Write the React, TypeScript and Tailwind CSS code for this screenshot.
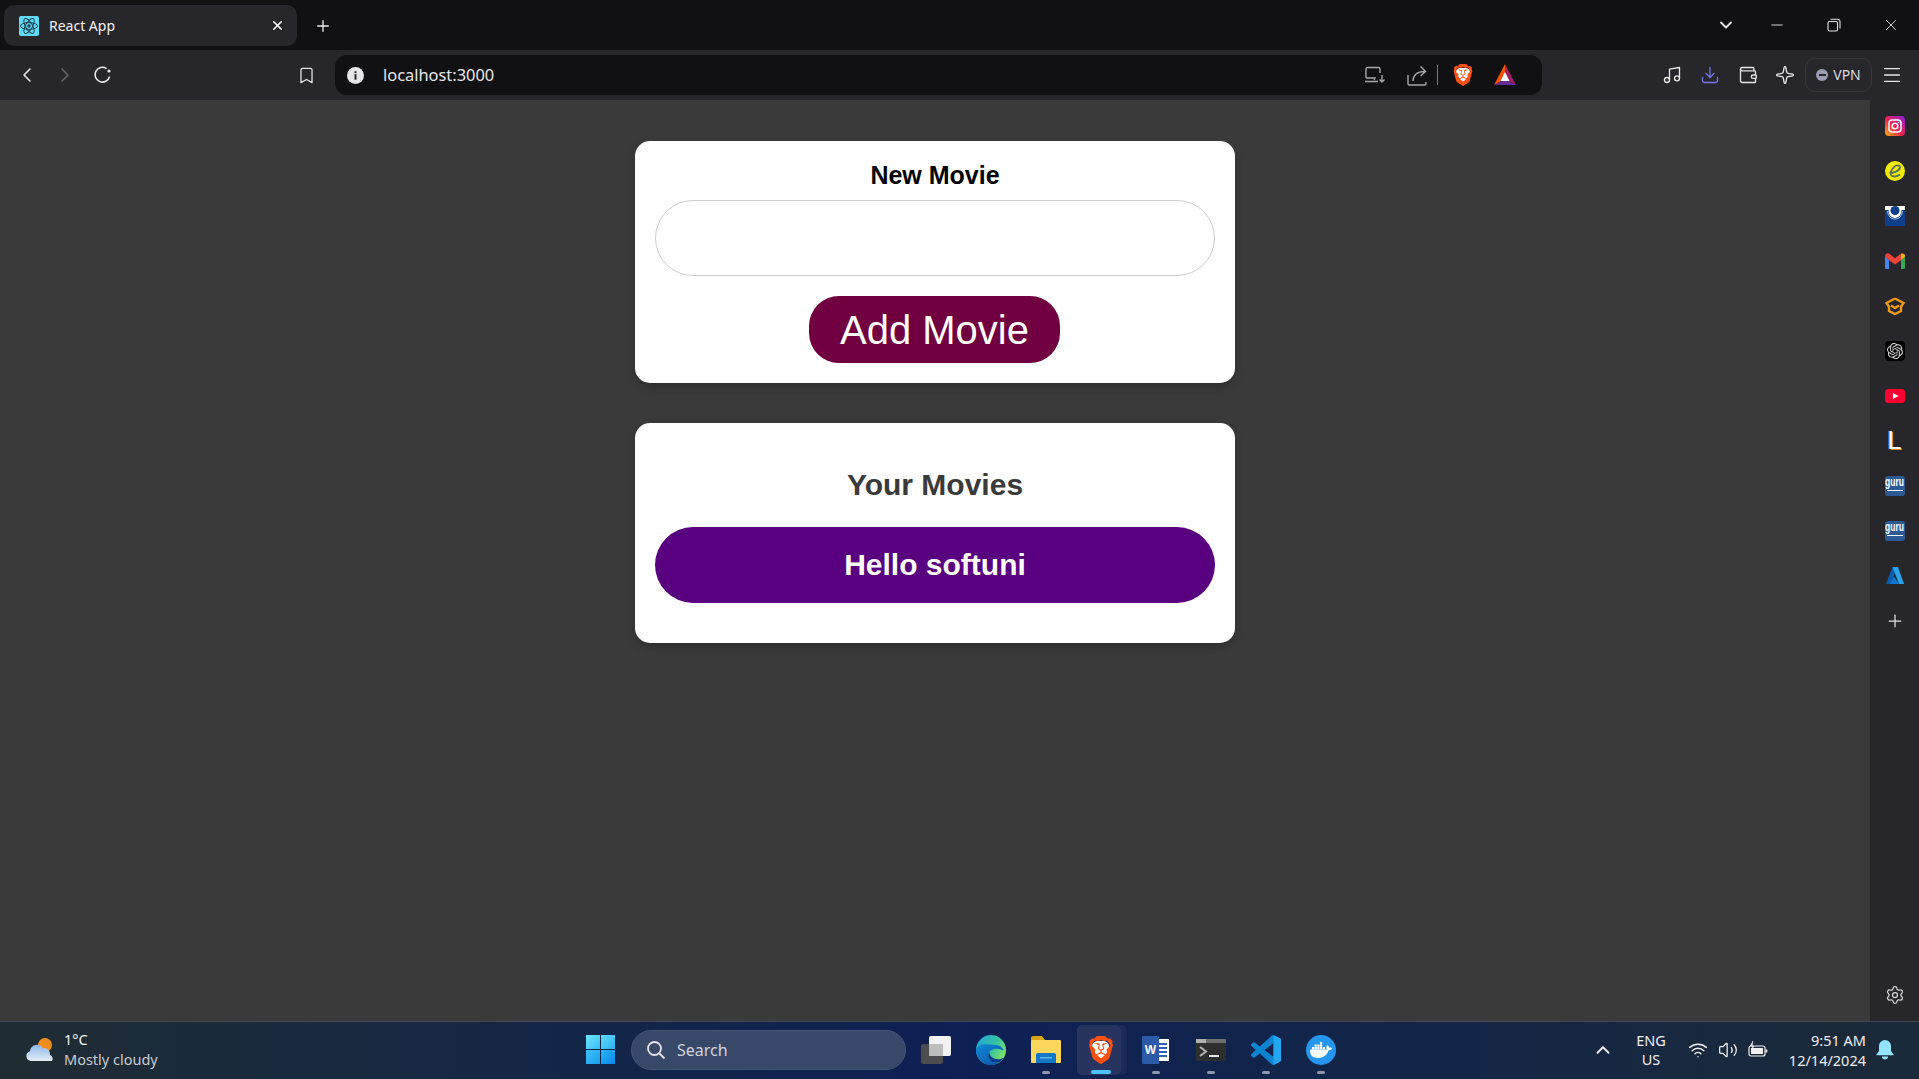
import {
  Bookmark,
  ChevronDown,
  ChevronLeft,
  ChevronRight,
  ChevronUp,
  Download,
  Menu,
  Minus,
  Music,
  Plus,
  Settings,
  Sparkle,
  Volume2,
  Wallet,
  Wifi,
  X,
} from "lucide-react";
import { SiBrave, SiDocker, SiOpenai } from "react-icons/si";

const uiFont = "font-['Noto_Sans','Open_Sans',sans-serif]";

const BraveIcon = ({ size }: { size: number }) => (
  <div className="relative flex items-center justify-center" style={{ width: size, height: size }}>
    <div className="absolute inset-[18%] rounded-[30%] bg-white"></div>
    <SiBrave size={size} color="#fb4f14" className="relative" />
  </div>
);

const BatIcon = () => (
  <svg width="24" height="24" viewBox="0 0 24 24">
    <polygon points="12,1 1,22 12,16" fill="#ff5000" />
    <polygon points="12,1 23,22 12,16" fill="#9e1f63" />
    <polygon points="1,22 23,22 12,16" fill="#662d91" />
    <polygon points="12,9 7.5,18 16.5,18" fill="#fff" />
  </svg>
);

const ReactFavicon = () => (
  <svg width="20" height="20" viewBox="0 0 20 20">
    <rect width="20" height="20" rx="2" fill="#61dafb" />
    <g fill="none" stroke="#20404c" strokeWidth="1">
      <ellipse cx="10" cy="10" rx="8.5" ry="3.4" />
      <ellipse cx="10" cy="10" rx="8.5" ry="3.4" transform="rotate(60 10 10)" />
      <ellipse cx="10" cy="10" rx="8.5" ry="3.4" transform="rotate(120 10 10)" />
    </g>
    <circle cx="10" cy="10" r="1.7" fill="#20404c" />
  </svg>
);

const TitleBar = () => (
  <div className="flex h-[50px] shrink-0 bg-[#111113] pl-1 pt-[5px]">
    <div className="flex h-[41px] w-[293px] items-center rounded-[10px] bg-[#26262b] pl-[15px]">
      <ReactFavicon />
      <span className="ml-[10px] text-sm text-[#f4f4f5]">React App</span>
      <X size={15} strokeWidth={2.5} className="ml-auto mr-[12px] text-white" />
    </div>
    <div className="flex h-[41px] w-[52px] items-center justify-center">
      <Plus size={18} strokeWidth={1.8} className="text-[#ececec]" />
    </div>
    <div className="ml-auto flex h-[40px] items-center text-[#e6e6e6]">
      <ChevronDown size={20} strokeWidth={2.2} className="mr-[32px]" />
      <Minus size={18} strokeWidth={1.2} className="mr-[41px]" />
      <svg width="14" height="14" viewBox="0 0 14 14" fill="none" stroke="currentColor" strokeWidth="1.1" className="mr-[41px]">
        <rect x="1" y="3.5" width="9.5" height="9.5" rx="1.5" />
        <path d="M3.5 1.2h7.3a2.2 2.2 0 0 1 2.2 2.2v7.2" />
      </svg>
      <X size={18} strokeWidth={1.2} className="mr-[19px]" />
    </div>
  </div>
);

const CastIcon = () => (
  <svg width="22" height="18" viewBox="0 0 22 18" fill="none" stroke="#a6a6ab" strokeWidth="1.4">
    <path d="M2 12V3a1.5 1.5 0 0 1 1.5-1.5h11A1.5 1.5 0 0 1 16 3v4" />
    <path d="M1 15.5h13M2 12h9l-1 2" />
    <path d="M18 9v7M15.5 13.5l2.5 2.5 2.5-2.5" />
  </svg>
);

const ShareIcon = () => (
  <svg width="20" height="21" viewBox="0 0 20 21" fill="none" stroke="#a6a6ab" strokeWidth="1.4">
    <path d="M1 10v8.5a1.5 1.5 0 0 0 1.5 1.5h15a1.5 1.5 0 0 0 1.5-1.5V17" />
    <path d="M6 16c0-6 4-9.5 12-9.5M13.5 1.5l5 5-5 4.5" />
  </svg>
);

const ReloadIcon = () => (
  <svg width="20" height="20" viewBox="0 0 20 20" fill="none" stroke="#e8e8e8" strokeWidth="1.6">
    <path d="M16.6 11.5A7.4 7.4 0 1 1 13.6 3.6" />
    <circle cx="16" cy="6" r="1.6" fill="#e8e8e8" stroke="none" />
  </svg>
);

const InfoIcon = () => (
  <svg width="17" height="17" viewBox="0 0 17 17">
    <circle cx="8.5" cy="8.5" r="8.5" fill="#e6e6e8" />
    <rect x="7.5" y="7.2" width="2" height="5.5" fill="#26262b" />
    <rect x="7.5" y="4.2" width="2" height="2" fill="#26262b" />
  </svg>
);

const Toolbar = () => (
  <div className="flex h-[50px] shrink-0 items-center bg-[#26262b] pl-2 text-[#e6e6e6]">
    <div className="flex w-[38px] justify-center">
      <ChevronLeft size={24} strokeWidth={1.6} />
    </div>
    <div className="flex w-[38px] justify-center text-[#66666b]">
      <ChevronRight size={24} strokeWidth={1.6} />
    </div>
    <div className="ml-px flex w-[36px] justify-center">
      <ReloadIcon />
    </div>
    <div className="ml-[167px] flex w-[36px] justify-center">
      <Bookmark size={19} strokeWidth={1.6} />
    </div>
    <div className="ml-[11px] flex h-[40px] w-[1207px] items-center rounded-[12px] bg-[#111113] pl-3 pr-[19px]">
      <InfoIcon />
      <span className="ml-[19px] text-[16.4px] text-[#e8e8ec]">localhost:3000</span>
      <div className="ml-auto mr-[6px] flex w-[36px] justify-center">
        <CastIcon />
      </div>
      <div className="mr-[3px] flex w-[35px] justify-center">
        <ShareIcon />
      </div>
      <div className="mr-[7px] h-[20px] w-px bg-[#77777c]"></div>
      <div className="mr-[6px] flex w-[36px] justify-center">
        <BraveIcon size={22} />
      </div>
      <div className="flex w-[36px] justify-center">
        <BatIcon />
      </div>
    </div>
    <div className="ml-[111px] flex w-[38px] justify-center">
      <Music size={20} strokeWidth={1.6} />
    </div>
    <div className="flex w-[38px] justify-center text-[#7674e8]">
      <Download size={20} strokeWidth={1.6} />
    </div>
    <div className="flex w-[37px] justify-center">
      <Wallet size={20} strokeWidth={1.6} />
    </div>
    <div className="mr-px flex w-[38px] justify-center">
      <Sparkle size={20} strokeWidth={1.6} />
    </div>
    <div className="flex h-[34px] w-[67px] items-center justify-center gap-[5px] rounded-[10px] border border-[#36363d] text-sm text-[#dcdce0]">
      <div className="flex h-[12px] w-[12px] items-center justify-center rounded-full bg-[#9a9cb0]">
        <div className="h-[2px] w-[7px] bg-[#26262b]"></div>
      </div>
      VPN
    </div>
    <div className="flex w-[40px] justify-center">
      <Menu size={22} strokeWidth={1.5} />
    </div>
  </div>
);

const InstagramIcon = () => (
  <svg width="20" height="20" viewBox="0 0 20 20">
    <defs>
      <linearGradient id="ig" x1="0" y1="1" x2="1" y2="0">
        <stop offset="0" stopColor="#fdb813" />
        <stop offset="0.45" stopColor="#f0214f" />
        <stop offset="1" stopColor="#8a1fe0" />
      </linearGradient>
    </defs>
    <rect width="20" height="20" rx="4" fill="url(#ig)" />
    <rect x="4" y="4" width="12" height="12" rx="3.2" fill="none" stroke="#fff" strokeWidth="1.5" />
    <circle cx="10" cy="10" r="2.8" fill="none" stroke="#fff" strokeWidth="1.5" />
    <circle cx="13.6" cy="6.4" r="0.8" fill="#fff" />
  </svg>
);

const ELogo = () => (
  <svg width="20" height="20" viewBox="0 0 20 20">
    <circle cx="10" cy="10" r="10" fill="#f3ea00" />
    <path d="M4.5 12c4 0 10-2 10.500-5.500.3-2.300-3.500-2.800-5.800-.7C7 8 5 11.500 6 14c1 2.200 5.500 2 9-.5" fill="none" stroke="#57705f" strokeWidth="1.8" />
  </svg>
);

const UniLogo = () => (
  <svg width="20" height="20" viewBox="0 0 20 20">
    <rect width="20" height="20" fill="#fff" />
    <path d="M0 4h3.5c0 5 3 8 6.5 8s6.5-3 6.5-8H20v16H0z" fill="#0d3f8c" />
    <circle cx="10" cy="4.5" r="4.5" fill="#0d3f8c" />
    <path d="M2.5 5c.5 5 3.5 8 7.5 8s7-3 7.5-8" fill="none" stroke="#a8c0e0" strokeWidth="1" />
  </svg>
);

const GmailIcon = () => (
  <svg width="20" height="16" viewBox="0 0 20 16">
    <path d="M0 3v11.5A1.5 1.5 0 0 0 1.5 16H4V7z" fill="#4285f4" />
    <path d="M16 7v9h2.5a1.5 1.5 0 0 0 1.5-1.5V3z" fill="#34a853" />
    <path d="M0 3.2C0 .8 2.6-.6 4.4.8L10 5.2 15.600.8C17.400-.6 20 .8 20 3.2L16 7.200l-6 4.400-6-4.400z" fill="#ea4335" />
    <path d="M16 1v6.200L20 3.200C20 1.600 18.800.2 16 1z" fill="#fbbc04" />
  </svg>
);

const BoxLogo = () => (
  <svg width="20" height="18" viewBox="0 0 20 18" fill="none" stroke="#f29a0a" strokeWidth="2.4">
    <path d="M10 1.500L1.500 6 4 9.500M10 1.500L18.500 6 16 9.500" />
    <path d="M4 9v5l6 3 6-3V9" />
    <path d="M6 8.500l4 2.500 4-2.500" />
  </svg>
);

const ChatGptIcon = () => (
  <div className="flex h-5 w-5 items-center justify-center rounded-[4px] bg-black">
    <SiOpenai size={16} color="#d4d4d4" />
  </div>
);

const YoutubeIcon = () => (
  <svg width="20" height="14" viewBox="0 0 20 14">
    <rect width="20" height="14" rx="3.500" fill="#ff0033" />
    <polygon points="8,4 13.500,7 8,10" fill="#fff" />
  </svg>
);

const LetterL = () => (
  <span className="font-['Liberation_Sans',sans-serif] text-[25px] leading-none font-normal text-white [text-shadow:-1px_0_#2f9bff,1px_1px_#c98a3a]">
    L
  </span>
);

const GuruIcon = () => (
  <div className="flex h-5 w-5 flex-col items-center justify-center overflow-hidden rounded-[3px] bg-[#2d5a94]">
    <span className="origin-bottom scale-y-[1.5] font-['Liberation_Sans',sans-serif] text-[8.5px] leading-[9px] font-bold text-white">guru</span>
    <div className="mt-[1px] h-px w-4 bg-white"></div>
  </div>
);

const AzureIcon = () => (
  <svg width="18" height="18" viewBox="0 0 18 18">
    <polygon points="6.500,0 11,0 5,17 0,17" fill="#0a5cb0" />
    <polygon points="6.500,0 12,0 18,17 13,17" fill="#2aa3e8" />
    <polygon points="8,9.500 13,17 4,17" fill="#0f78d4" />
  </svg>
);

const sidebarIcons = [
  <InstagramIcon />,
  <ELogo />,
  <UniLogo />,
  <GmailIcon />,
  <BoxLogo />,
  <ChatGptIcon />,
  <YoutubeIcon />,
  <LetterL />,
  <GuruIcon />,
  <GuruIcon />,
  <AzureIcon />,
  <Plus size={20} strokeWidth={1.5} className="text-[#e6e6e6]" />,
];

const Sidebar = () => (
  <div className="flex w-[49px] shrink-0 flex-col items-center bg-[#26262b] pb-[16px] pt-[3px]">
    {sidebarIcons.map((icon, index) => (
      <div key={index} className="flex h-[45px] w-full items-center justify-center">
        {icon}
      </div>
    ))}
    <Settings size={20} strokeWidth={1.5} className="mt-auto text-[#d8d8dc]" />
  </div>
);

const Movies = () => (
  <div className="flex flex-1 flex-col items-center gap-[40px] bg-[#3a3a3a] pt-[41px] font-['Liberation_Sans',Arial,sans-serif]">
    <div className="flex h-[242px] w-[600px] flex-col items-center rounded-[15px] bg-white px-5 shadow-[0_4px_8px_rgba(0,0,0,0.2)]">
      <h2 className="mt-[20px] text-[25px] leading-[28px] font-bold text-black">New Movie</h2>
      <div className="mt-[11px] h-[76px] w-[560px] rounded-[38px] border border-[#cccccc]"></div>
      <button className="mr-px mt-[20px] h-[67px] w-[251px] rounded-[30px] bg-[#70003f] text-[40px] text-white">Add Movie</button>
    </div>
    <div className="flex h-[220px] w-[600px] flex-col items-center rounded-[15px] bg-white px-5 shadow-[0_4px_8px_rgba(0,0,0,0.2)]">
      <h2 className="mt-[43px] text-[30px] leading-[37px] font-bold text-[#3a3a3a]">Your Movies</h2>
      <div className="mt-[24px] flex h-[76px] w-[560px] items-center justify-center rounded-[38px] bg-[#580080] pb-[2px] text-[30px] font-bold text-white">
        Hello softuni
      </div>
    </div>
  </div>
);

const WeatherIcon = () => (
  <svg width="32" height="32" viewBox="0 0 32 32">
    <defs>
      <linearGradient id="cloud" x1="0" y1="0" x2="0" y2="1">
        <stop offset="0" stopColor="#8db8ea" />
        <stop offset="1" stopColor="#e4ecf8" />
      </linearGradient>
    </defs>
    <circle cx="21" cy="11" r="7" fill="#f08c1e" />
    <path d="M7 27a5 5 0 0 1-1-9.800 7 7 0 0 1 13-3 6 6 0 0 1 7 6.800 4 4 0 0 1 2 6z" fill="url(#cloud)" />
  </svg>
);

const StartIcon = () => (
  <div className="grid h-[29px] w-[29px] grid-cols-2 gap-px">
    <div className="bg-gradient-to-br from-[#6fe4fb] to-[#35bdf5]"></div>
    <div className="bg-gradient-to-br from-[#5cd8fa] to-[#2fb2f3]"></div>
    <div className="bg-gradient-to-br from-[#3cc4f7] to-[#1b9cf0]"></div>
    <div className="bg-gradient-to-br from-[#2ab4f5] to-[#0f86ec]"></div>
  </div>
);

const TaskView = () => (
  <svg width="30" height="28" viewBox="0 0 30 28">
    <rect x="0" y="8" width="22" height="20" rx="2" fill="#4d4d4f" />
    <rect x="8" y="0" width="22" height="20" rx="2" fill="#f2f2f2" />
    <rect x="8" y="8" width="14" height="12" fill="#bdbdbd" />
  </svg>
);

const EdgeIcon = () => (
  <svg width="30" height="30" viewBox="0 0 30 30">
    <defs>
      <linearGradient id="edge1" x1="0" y1="0" x2="1" y2="0.600">
        <stop offset="0" stopColor="#1fa2e0" />
        <stop offset="0.600" stopColor="#35c1a0" />
        <stop offset="1" stopColor="#7ce36a" />
      </linearGradient>
      <linearGradient id="edge2" x1="0" y1="0" x2="1" y2="1">
        <stop offset="0" stopColor="#0f8ad8" />
        <stop offset="1" stopColor="#0c4fa8" />
      </linearGradient>
    </defs>
    <circle cx="15" cy="15" r="15" fill="url(#edge1)" />
    <path d="M0 15A15 15 0 0 0 24 27c-5 1.500-9 .5-11-3-2.500-4 0-9 5-10 3-.6 6.500 0 9.500 1.500C27 13 24 10 19 10 10 9 2 8 0 15z" fill="url(#edge2)" />
    <path d="M24 27c-5 1.500-9 .5-11-3-1.500-2.500-1-5 .5-7 0 5 5 8 11 7 2-.3 3.500-1.500 4-3A15 15 0 0 1 24 27z" fill="#0a3d8f" />
  </svg>
);

const ExplorerIcon = () => (
  <svg width="30" height="27" viewBox="0 0 30 27">
    <path d="M0 2a2 2 0 0 1 2-2h9l3 4h14v6H0z" fill="#d9a514" />
    <rect y="4" width="30" height="23" rx="1" fill="#fbd75b" />
    <path d="M5 19a2 2 0 0 1 2-2h16a2 2 0 0 1 2 2v8H5z" fill="#1276c9" />
    <rect x="9" y="21" width="12" height="1.500" fill="#5cb4f0" />
  </svg>
);

const WordIcon = () => (
  <div className="relative flex h-[28px] w-[27px] items-center">
    <div className="ml-[9px] flex h-[22px] w-[18px] flex-col items-end justify-center gap-[2px] bg-white pr-[2px]">
      <div className="h-[2px] w-[8px] bg-[#2b5fb4]"></div>
      <div className="h-[2px] w-[8px] bg-[#2b5fb4]"></div>
      <div className="h-[2px] w-[8px] bg-[#2b5fb4]"></div>
      <div className="h-[2px] w-[8px] bg-[#2b5fb4]"></div>
    </div>
    <div className="absolute left-0 top-0 flex h-[28px] w-[17px] items-center justify-center rounded-l-[1px] bg-[#2b5aa8] font-['Liberation_Sans',sans-serif] text-[12px] font-bold text-white">
      W
    </div>
  </div>
);

const TerminalIcon = () => (
  <svg width="30" height="22" viewBox="0 0 30 22">
    <rect width="30" height="22" rx="1.500" fill="#2e2e2e" />
    <rect width="30" height="4" fill="#6f6f6f" />
    <rect width="10" height="4" fill="#b0b0b0" />
    <path d="M4 8l6 4.500-6 4.500" fill="none" stroke="#b4b4b4" strokeWidth="2" />
    <rect x="13" y="16" width="10" height="2" fill="#e6e6e6" />
  </svg>
);

const VscodeIcon = () => (
  <svg width="30" height="30" viewBox="0 0 24 24">
    <path
      d="M23.150 2.587L18.210.21a1.494 1.494 0 0 0-1.705.29l-9.460 8.630-4.120-3.128a.999.999 0 0 0-1.276.057L.327 7.261A1 1 0 0 0 .326 8.740L3.899 12 .326 15.260a1 1 0 0 0 .001 1.479L1.650 17.940a.999.999 0 0 0 1.276.057l4.120-3.128 9.460 8.630a1.492 1.492 0 0 0 1.704.29l4.942-2.377A1.500 1.500 0 0 0 24 20.060V3.939a1.500 1.500 0 0 0-.85-1.352zm-5.146 14.861L10.826 12l7.178-5.448v10.896z"
      fill="#0a84d0"
    />
    <path d="M18 .1l5.150 2.487A1.500 1.500 0 0 1 24 3.939V20.060a1.500 1.500 0 0 1-.85 1.352L18 23.900z" fill="#22a7f0" />
  </svg>
);

const DockerIcon = () => (
  <div className="flex h-[30px] w-[30px] items-center justify-center rounded-full bg-[#2496ed]">
    <SiDocker size={22} color="#ffffff" />
  </div>
);

const Dot = () => <div className="absolute bottom-[3px] h-[3px] w-[8px] rounded-full bg-[#8c96ac]"></div>;

const TaskSlot = ({ children, dot }: { children: React.ReactNode; dot?: boolean }) => (
  <div className="relative flex h-[54px] w-[55px] items-center justify-center">
    {children}
    {dot && <Dot />}
  </div>
);

const BatteryIcon = () => (
  <svg width="20" height="18" viewBox="0 0 20 18" fill="none" stroke="#f0f0f0" strokeWidth="1.2">
    <rect x="1" y="5" width="16" height="10" rx="2" />
    <rect x="3" y="7" width="12" height="6" fill="#f0f0f0" stroke="none" />
    <path d="M18.500 8.500v3" strokeWidth="1.6" />
    <path d="M5 0L2.500 5h3L4 9" fill="#f0f0f0" strokeWidth="0.8" />
  </svg>
);

const BellIcon = () => (
  <svg width="18" height="20" viewBox="0 0 18 20">
    <path d="M9 0a6 6 0 0 1 6 6v5l2.500 3.500a.5.5 0 0 1-.5.800H1a.5.5 0 0 1-.5-.8L3 11V6a6 6 0 0 1 6-6z" fill="#93e4ff" />
    <path d="M6 16.500h6a3 3 0 0 1-6 0z" fill="#93e4ff" />
  </svg>
);

const Taskbar = () => (
  <div className="flex h-[58px] shrink-0 items-center border-t border-[#3d4a5a] bg-gradient-to-r from-[#1f2c33] via-[#0e2054] to-[#1b2a38] pb-[2px] text-white">
    <div className="flex w-[570px] items-center pl-6">
      <WeatherIcon />
      <div className="ml-2 flex flex-col pb-[2px] text-[14.5px] leading-[20px]">
        <span className="text-[#f4f4f4]">1°C</span>
        <span className="text-[#c8ccd0]">Mostly cloudy</span>
      </div>
    </div>
    <div className="flex w-[60px] items-center justify-center">
      <StartIcon />
    </div>
    <div className="ml-px flex h-[40px] w-[275px] items-center rounded-full border border-[#46557a] bg-[#384868] pl-[14px] text-base text-[#d0d4dc]">
      <svg width="20" height="20" viewBox="0 0 20 20" fill="none" stroke="#e4e4e8" strokeWidth="1.8">
        <circle cx="8.500" cy="8.500" r="6.500" />
        <path d="M13.500 13.500l5 5" />
      </svg>
      <span className="ml-[11px]">Search</span>
    </div>
    <div className="ml-[2px] flex items-center">
      <TaskSlot>
        <TaskView />
      </TaskSlot>
      <TaskSlot>
        <EdgeIcon />
      </TaskSlot>
      <TaskSlot dot>
        <ExplorerIcon />
      </TaskSlot>
      <TaskSlot>
        <div className="mr-[4px] flex h-[50px] w-[44px] items-center justify-center rounded-[5px] bg-[#26345f] pl-[4px] shadow-[6px_0_0_#1b2a56]">
          <BraveIcon size={28} />
        </div>
        <div className="absolute bottom-[3px] h-[4px] w-[20px] rounded-full bg-[#4cc2ff]"></div>
      </TaskSlot>
      <TaskSlot dot>
        <WordIcon />
      </TaskSlot>
      <TaskSlot dot>
        <TerminalIcon />
      </TaskSlot>
      <TaskSlot dot>
        <VscodeIcon />
      </TaskSlot>
      <TaskSlot dot>
        <DockerIcon />
      </TaskSlot>
    </div>
    <div className="ml-auto flex items-center pr-[25px] text-[14.5px] text-[#f0f0f0]">
      <ChevronUp size={22} strokeWidth={2} className="mr-[17px]" />
      <div className="mr-[17px] flex w-[40px] flex-col items-center leading-[19px]">
        <span>ENG</span>
        <span>US</span>
      </div>
      <Wifi size={20} strokeWidth={1.8} className="mr-[10px]" />
      <Volume2 size={20} strokeWidth={1.5} className="mr-[10px]" />
      <BatteryIcon />
      <div className="mr-[10px] flex w-[98px] flex-col items-end leading-[20px]">
        <span>9:51 AM</span>
        <span>12/14/2024</span>
      </div>
      <BellIcon />
    </div>
  </div>
);

export default function App() {
  return (
    <div className={`flex h-screen w-full flex-col overflow-hidden ${uiFont}`}>
      <TitleBar />
      <Toolbar />
      <div className="flex min-h-0 flex-1">
        <Movies />
        <Sidebar />
      </div>
      <Taskbar />
    </div>
  );
}
